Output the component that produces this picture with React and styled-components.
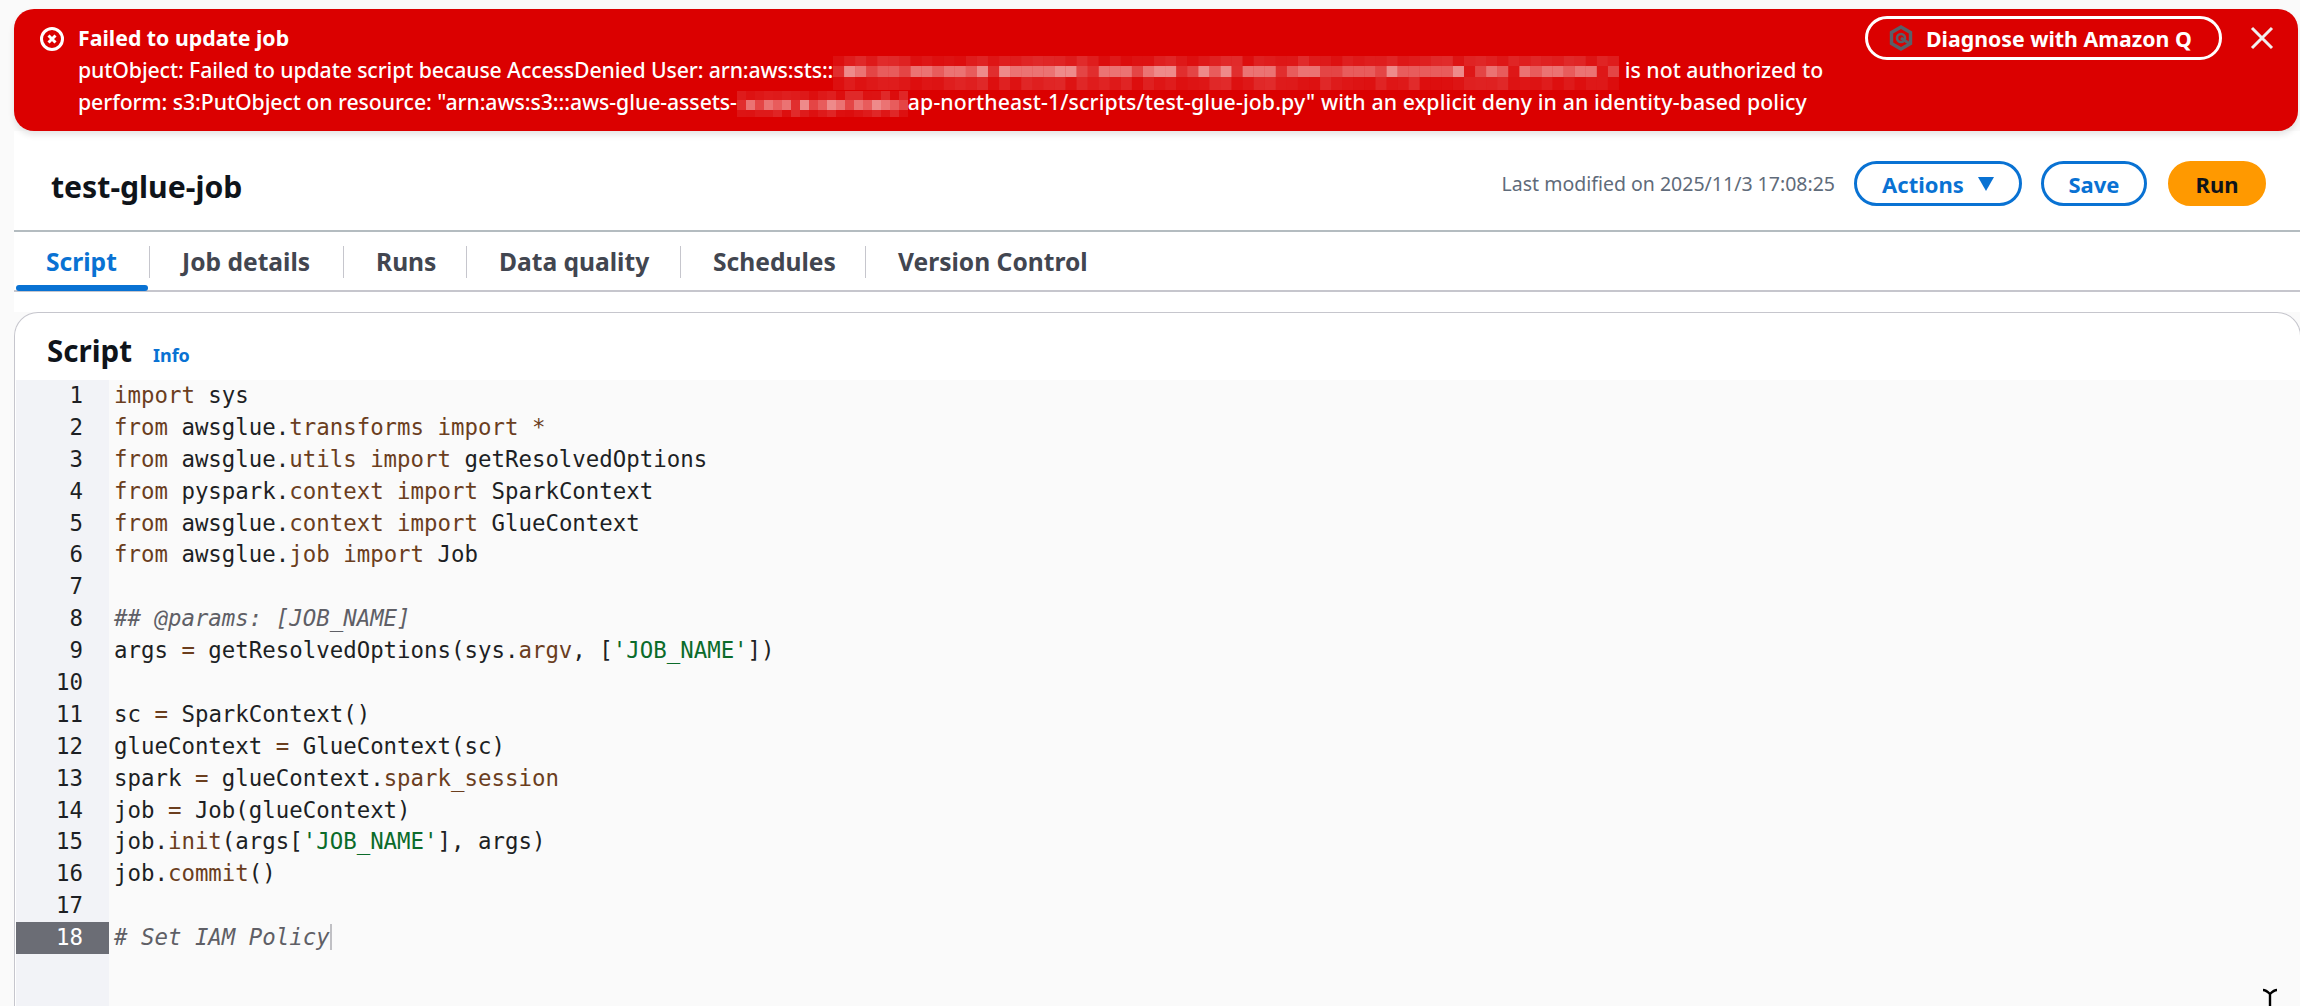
import React from "react";
import styled, { createGlobalStyle } from "styled-components";

const Global = createGlobalStyle`
  html, body { margin: 0; padding: 0; background: #fafafa; }
  body { width: 2300px; height: 1006px; overflow: hidden; font-family: "Noto Sans", "Open Sans", sans-serif; }
`;
const Page = styled.div`
  position: relative; width: 2300px; height: 1006px; padding: 9px 0 0 14px; box-sizing: border-box; overflow: hidden; background: #fafafa;
`;
const Banner = styled.div`
  display: flex; height: 122px; margin-right: 2px; box-sizing: border-box; background: #db0000; color: #fff; border-radius: 20px;
  padding: 10px 24px 0 25px; box-shadow: 0 4px 6px rgba(0,0,0,.1); position: relative; z-index: 1;
`;
const BannerIcon = styled.svg`width: 26px; height: 26px; margin-top: 7px; flex: none;`;
const BannerBody = styled.div`flex: 1; margin-left: 13px; font-size: 21.25px; line-height: 32px; font-weight: 500; padding-top: 3px; white-space: nowrap;`;
const BannerTitle = styled.div`font-weight: 700; font-size: 21.3px;`;
const Seg = styled.span`letter-spacing: ${p => p.$ls}px;`;
const Mosaic = styled.svg`
  display: inline-block; vertical-align: top; margin-top: ${p => p.$top}px; margin-bottom: -12px;
`;
const Diagnose = styled.button`
  display: flex; align-items: center; height: 44px; width: 357px; box-sizing: border-box; justify-content: flex-start; gap: 13px;
  margin: -3px 28px 0 0; background: transparent; color: #fff; border: 3px solid #fff; border-radius: 22px;
  font: 700 21.3px "Noto Sans", sans-serif; padding: 0 0 0 21px; flex: none;
`;
const Close = styled.svg`width: 24px; height: 24px; margin-top: 7px; flex: none;`;
const Header = styled.div`
  display: flex; align-items: center; height: 101px; padding: 6px 34px 0 37px; background: #fff; box-sizing: border-box; border-bottom: 2px solid #b4bcc0;
`;
const Title = styled.h1`flex: 1; margin: 5px 0 0; font-size: 30.2px; font-weight: 700; color: #0f141a;`;
const Modified = styled.span`font-size: 19.5px; color: #5f6b7a; margin-right: 19px;`;
const Btn = styled.button`
  height: 45px; width: ${p => p.$w}px; margin-left: ${p => p.$ml || 0}px; box-sizing: border-box; border-radius: 23px;
  border: 3px solid ${p => p.$primary ? "#ff9900" : "#0972d3"};
  background: ${p => p.$primary ? "#ff9900" : "#fff"}; color: ${p => p.$primary ? "#0f141a" : "#0972d3"};
  font: 700 22px "Noto Sans", sans-serif; padding: 0; display: flex; align-items: center; justify-content: center; gap: 14px;
`;
const Tabs = styled.div`
  display: flex; height: 60px; box-sizing: border-box; background: #fff; border-bottom: 2px solid #c6c6cd; position: relative; padding-top: 14px;
`;
const Tab = styled.div`
  height: 32px; box-sizing: border-box; width: ${p => p.$w}px; padding-left: 32px; font-size: 24.6px; line-height: 32px; font-weight: 700;
  color: ${p => p.$active ? "#0972d3" : "#424650"}; border-right: ${p => p.$last ? "none" : "1px solid #c6c6cd"}; white-space: nowrap;
`;
const ActiveBar = styled.div`position: absolute; left: 2px; bottom: -1px; width: 132px; height: 6px; background: #0972d3; border-radius: 3px;`;
const Gap = styled.div`height: 20px; background: #fff;`;
const Card = styled.div`
  margin-right: -1px; background: #fff; border: 1px solid #c6c6cd; border-bottom: none; border-radius: 24px 24px 0 0; height: 700px;
`;
const CardHead = styled.div`display: flex; align-items: baseline; height: 67px; padding: 19px 0 0 32px; box-sizing: border-box;`;
const CardTitle = styled.h2`margin: 0; font-size: 29.5px; line-height: 38px; font-weight: 700; color: #0f141a;`;
const Info = styled.a`font-size: 18px; font-weight: 700; color: #0972d3; margin-left: 21px;`;
const Editor = styled.div`
  display: flex; height: 640px; margin-left: 1px; background: #fafafa;
  font: 22.4px/31.9px "DejaVu Sans Mono", monospace; color: #1d1f24;
`;
const Gutter = styled.div`width: 93px; flex: none; background: #f2f3f7;`;
const Num = styled.div`
  height: 31.9px; padding-right: 26px; text-align: right; box-sizing: border-box; font-size: 22.4px;
  ${p => p.$active ? "background:#6b6d75;color:#fff;" : ""}
`;
const Code = styled.div`flex: 1; padding-left: 5px; white-space: pre;`;
const Line = styled.div`height: 31.9px;`;
const K = styled.span`color: ${p => p.$c};`;
const Comment = styled.span`color: #5f5f66; font-style: italic;`;
const Caret = styled(Comment)`border-right: 2px solid #c0c0c4;`;
const ICursor = styled.svg`position: absolute; left: 2262px; top: 988px; width: 16px; height: 20px;`;

const kw = "#6b3e1e", str = "#0b6b2a";
const Kw = ({ children }) => <K $c={kw}>{children}</K>;

const pseudo = (i) => { const x = Math.sin(i * 12.9898) * 43758.5453; return x - Math.floor(x); };
function Blur({ cells, cell, rows, top, seed }) {
  const h = rows.reduce((a, b) => a + b, 0);
  let y = 0;
  const rects = [];
  rows.forEach((rh, r) => {
    for (let c = 0; c < cells.length; c++) {
      const o = r === 1 ? Number(cells[c]) / 10 * 0.9 : 0.05 + pseudo(seed + c * 7 + r * 31) * 0.12;
      rects.push(<rect key={r + "-" + c} x={c * cell} y={y} width={cell} height={rh} fill="#fff" opacity={o} />);
    }
    y += rh;
  });
  return <Mosaic $top={top} width={cells.length * cell} height={h}>{rects}</Mosaic>;
}
const blurOne = "26534435545546265555663255535662364" + "625552455334443644444613541545545513";
const blurTwo = "2535452634653546543";

const lines = [
  <><Kw>import</Kw> sys</>,
  <><Kw>from</Kw> awsglue.<Kw>transforms</Kw> <Kw>import</Kw> <Kw>*</Kw></>,
  <><Kw>from</Kw> awsglue.<Kw>utils</Kw> <Kw>import</Kw> getResolvedOptions</>,
  <><Kw>from</Kw> pyspark.<Kw>context</Kw> <Kw>import</Kw> SparkContext</>,
  <><Kw>from</Kw> awsglue.<Kw>context</Kw> <Kw>import</Kw> GlueContext</>,
  <><Kw>from</Kw> awsglue.<Kw>job</Kw> <Kw>import</Kw> Job</>,
  "",
  <Comment>## @params: [JOB_NAME]</Comment>,
  <>args <Kw>=</Kw> getResolvedOptions(sys.<Kw>argv</Kw>, [<K $c={str}>'JOB_NAME'</K>])</>,
  "",
  <>sc <Kw>=</Kw> SparkContext()</>,
  <>glueContext <Kw>=</Kw> GlueContext(sc)</>,
  <>spark <Kw>=</Kw> glueContext.<Kw>spark_session</Kw></>,
  <>job <Kw>=</Kw> Job(glueContext)</>,
  <>job.<Kw>init</Kw>(args[<K $c={str}>'JOB_NAME'</K>], args)</>,
  <>job.<Kw>commit</Kw>()</>,
  "",
  <Caret># Set IAM Policy</Caret>,
];
const tabs = [["Script", 136], ["Job details", 194], ["Runs", 123], ["Data quality", 214], ["Schedules", 185], ["Version Control", 300]];

export default function App() {
  return (
    <Page>
      <Global />
      <Banner>
        <BannerIcon viewBox="0 0 26 26" fill="none" stroke="#fff" strokeWidth="3">
          <circle cx="13" cy="13" r="10.5" /><path d="M9.5 9.5l7 7M16.5 9.5l-7 7" />
        </BannerIcon>
        <BannerBody>
          <BannerTitle>Failed to update job</BannerTitle>
          <div><Seg $ls={-0.115}>putObject: Failed to update script because AccessDenied User: arn:aws:sts::</Seg><Blur cells={blurOne} cell={11.07} rows={[10, 11, 13]} top={2} seed={2} /> is not authorized to</div>
          <div><Seg $ls={-0.07}>perform: s3:PutObject on resource: "arn:aws:s3:::aws-glue-assets-</Seg><Blur cells={blurTwo} cell={9} rows={[9, 10, 7]} top={5} seed={5} /><Seg $ls={0.12}>ap-northeast-1/scripts/test-glue-job.py" with an explicit deny in an identity-based policy</Seg></div>
        </BannerBody>
        <Diagnose>
          <svg width="24" height="26" viewBox="0 0 24 26" fill="none" stroke="#5a5f68" strokeWidth="3.4">
            <path d="M12 2l9.5 5.5v11L12 24l-9.5-5.5v-11z" />
            <circle cx="12" cy="13" r="4" strokeWidth="2.6" />
            <path d="M12 13l9 6" strokeWidth="3" />
          </svg>
          Diagnose with Amazon Q
        </Diagnose>
        <Close viewBox="0 0 24 24" fill="none" stroke="#f0f0f0" strokeWidth="3"><path d="M2 2l20 20M22 2L2 22" /></Close>
      </Banner>
      <Header>
        <Title>test-glue-job</Title>
        <Modified>Last modified on 2025/11/3 17:08:25</Modified>
        <Btn $w={168}>Actions <svg width="16" height="14" viewBox="0 0 16 14"><path d="M0 0h16L8 14z" fill="#0972d3" /></svg></Btn>
        <Btn $w={106} $ml={19}>Save</Btn>
        <Btn $w={98} $ml={21} $primary>Run</Btn>
      </Header>
      <Tabs>
        {tabs.map(([t, w], i) => <Tab key={t} $w={w} $active={i === 0} $last={i === 5}>{t}</Tab>)}
        <ActiveBar />
      </Tabs>
      <Gap />
      <Card>
        <CardHead><CardTitle>Script</CardTitle><Info>Info</Info></CardHead>
        <Editor>
          <Gutter>{lines.map((_, i) => <Num key={i} $active={i === 17}>{i + 1}</Num>)}</Gutter>
          <Code>{lines.map((l, i) => <Line key={i}>{l}</Line>)}</Code>
        </Editor>
      </Card>
      <ICursor viewBox="0 0 16 20" fill="none" stroke="#000" strokeWidth="2.4"><path d="M1 2c3 0 5 2 7 4 2-2 4-4 7-4M8 6v14" /></ICursor>
    </Page>
  );
}
